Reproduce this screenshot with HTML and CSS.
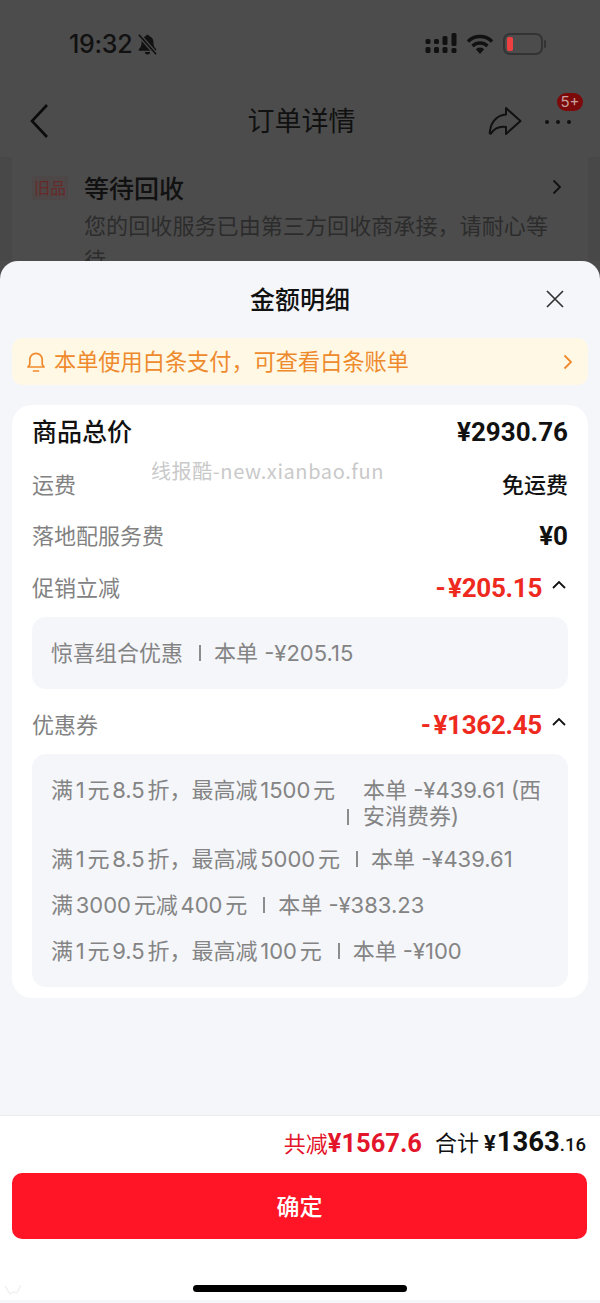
FILE: index.html
```html
<!DOCTYPE html>
<html lang="zh-CN">
<head>
<meta charset="utf-8">
<title>金额明细</title>
<link rel="stylesheet" href="styles.css">
</head>
<body>
<div class="phone">
  <div class="backdrop">
    <div class="status">
      <div class="status-left">
        <span class="time">19:32</span>
        <svg class="mute" viewBox="0 0 20 20" width="23" height="23"><path d="M10 1.500c-.8 0-1.300.5-1.400 1.200C6 3.500 4.800 5.500 4.800 8.500c0 3-1 4.500-2.300 5.500v1.500h15V14c-1.300-1-2.300-2.500-2.300-5.500 0-3-1.200-5-3.800-5.800-.1-.7-.6-1.200-1.400-1.200zM7.800 16.500a2.200 2.200 0 0 0 4.400 0z" fill="#111"/><path d="M2.500 1.500l15 17" stroke="#4c4c4c" stroke-width="3.600"/><path d="M2.500 1.500l15 17" stroke="#111" stroke-width="1.500"/></svg>
      </div>
      <div class="status-right">
        <svg viewBox="0 0 31 22" width="32" height="22"><g fill="#111"><rect x="0" y="6" width="5" height="5" rx="1.500"/><rect x="0" y="14" width="5" height="6" rx="1.500"/><rect x="8.500" y="6" width="5" height="5" rx="1.500"/><rect x="8.500" y="14" width="5" height="6" rx="1.500"/><rect x="17" y="3" width="5" height="9" rx="1.500"/><rect x="17" y="14" width="5" height="6" rx="1.500"/><rect x="26" y="0" width="5" height="13" rx="1.500"/><rect x="26" y="15" width="5" height="5" rx="1.500"/></g></svg>
        <svg viewBox="0 0 28 22" width="28" height="22"><path d="M2 8.500a17 17 0 0 1 24 0M6.500 13a11 11 0 0 1 15 0" fill="none" stroke="#111" stroke-width="3.400"/><path d="M9.800 16.300a6 6 0 0 1 8.400 0L14 21z" fill="#111"/></svg>
        <div class="battery"><span class="charge"></span></div>
      </div>
    </div>
    <div class="nav">
      <svg class="back" viewBox="0 0 20 36" width="20" height="36"><path d="M18 2L3 18l15 16" fill="none" stroke="#0b0b0b" stroke-width="2.600"/></svg>
      <h1 class="nav-title">订单详情</h1>
      <div class="nav-actions">
        <svg viewBox="0 0 34 30" width="34" height="30"><path d="M18 2L32.500 15 18 28v-7C11 20 6 23 3 27.500c-1.500.5-1.500-.5-1-2.500C3 15 10 9 18 8.500z" fill="none" stroke="#111" stroke-width="2" stroke-linejoin="round"/></svg>
        <div class="more"><i></i><i></i><i></i><span class="badge">5+</span></div>
      </div>
    </div>
    <div class="under">
      <div class="under-card">
        <span class="old-tag">旧品</span>
        <div class="under-body">
          <div class="under-head"><span class="under-title">等待回收</span>
            <svg viewBox="0 0 10 16" width="10" height="16"><path d="M1.500 1.500L8 8l-6.500 6.500" fill="none" stroke="#111" stroke-width="1.800"/></svg>
          </div>
          <p class="under-text">您的回收服务已由第三方回收商承接，请耐心等待</p>
        </div>
      </div>
    </div>
  </div>

  <section class="sheet">
    <header class="sheet-head">
      <h2 class="sheet-title">金额明细</h2>
      <svg class="close" viewBox="0 0 20 20" width="20" height="20"><path d="M2 2l16 16M18 2L2 18" stroke="#333" stroke-width="1.700" fill="none"/></svg>
    </header>
    <div class="notice">
      <svg viewBox="0 0 18 22" width="18" height="22"><path d="M1 16h16l-1.800-2.500V8.500A6.200 6.200 0 0 0 2.800 8.500v5zM6.500 20h5" fill="none" stroke="#f08a2c" stroke-width="1.700" stroke-linejoin="round" stroke-linecap="round"/></svg>
      <span class="notice-text">本单使用白条支付，可查看白条账单</span>
      <svg viewBox="0 0 10 16" width="10" height="16"><path d="M1.500 1.500L8 8l-6.500 6.500" fill="none" stroke="#f08a2c" stroke-width="1.800"/></svg>
    </div>
    <div class="card">
      <div class="row row-total"><span class="total-label">商品总价</span><span class="price">¥2930.76</span></div>
      <div class="row row-ship"><span class="label">运费</span><span class="price-small">免运费</span></div>
      <div class="row row-land"><span class="label">落地配服务费</span><span class="price">¥0</span></div>
      <div class="row row-promo"><span class="label">促销立减</span>
        <span class="discount-wrap"><span class="discount">- ¥205.15</span>
        <svg class="caret" viewBox="0 0 14 10" width="14" height="10"><path d="M1 8l6-6 6 6" fill="none" stroke="#111" stroke-width="1.800"/></svg></span>
      </div>
      <div class="box box-promo">
        <div class="line"><span class="line-name">惊喜组合优惠</span><span class="sep"></span><span class="line-amount">本单 -¥205.15</span></div>
      </div>
      <div class="row row-coupon"><span class="label">优惠券</span>
        <span class="discount-wrap"><span class="discount">- ¥1362.45</span>
        <svg class="caret" viewBox="0 0 14 10" width="14" height="10"><path d="M1 8l6-6 6 6" fill="none" stroke="#111" stroke-width="1.800"/></svg></span>
      </div>
      <div class="box box-coupon">
        <div class="line line-wrap"><span class="line-name">满1元8.5折，最高减1500元</span><span class="sep sep-end"></span><span class="line-amount">本单 -¥439.61 (西安消费券)</span></div>
        <div class="line"><span class="line-name">满1元8.5折，最高减5000元</span><span class="sep"></span><span class="line-amount">本单 -¥439.61</span></div>
        <div class="line"><span class="line-name">满3000元减400元</span><span class="sep"></span><span class="line-amount">本单 -¥383.23</span></div>
        <div class="line"><span class="line-name">满1元9.5折，最高减100元</span><span class="sep"></span><span class="line-amount">本单 -¥100</span></div>
      </div>
    </div>
    <span class="watermark">线报酷-new.xianbao.fun</span>
    <footer class="foot">
      <div class="sum">
        <span class="saved">共减<b>¥1567.6</b></span>
        <span class="grand"><span class="grand-label">合计</span> <b class="yen">¥</b><b class="big">1363</b><b class="cents">.16</b></span>
      </div>
      <button class="confirm">确定</button>
      <div class="home-wrap"><span class="home"></span></div>
      <svg class="corner-mark" viewBox="0 0 18 12" width="18" height="12"><path d="M1 2l5 8 3-2M17 1l-4 8-4-1" fill="none" stroke="#f1f1f1" stroke-width="1.500"/></svg>
    </footer>
  </section>
</div>
</body>
</html>
```
FILE: styles.css
```css
* { box-sizing: border-box; }
html, body { margin: 0; padding: 0; }
body { font-family: "Noto Sans CJK SC", "Inter", sans-serif; background: #4c4c4c; }
h1, h2, p { margin: 0; font-weight: 400; }
.phone { width: 600px; height: 1303px; display: flex; flex-direction: column; position: relative; overflow: hidden; text-autospace: normal; background: #4c4c4c; }

.backdrop { height: 261px; background: #4c4c4c; overflow: hidden; flex: none; color: #111; }
.status { height: 85px; padding: 22px 57px 0 69px; display: flex; justify-content: space-between; align-items: flex-start; }
.status-left, .status-right { display: flex; align-items: center; height: 44px; }
.status-left { gap: 4px; }
.status-right { gap: 9px; }
.time { font-family: "Inter", sans-serif; font-size: 25px; font-weight: 500; color: #111; letter-spacing: -.3px; }
.battery { width: 40px; height: 22px; border: 2px solid #333; border-radius: 7px; padding: 2px; position: relative; }
.battery::after { content: ""; position: absolute; right: -5px; top: 5px; width: 2px; height: 8px; background: #333; border-radius: 1px; }
.charge { display: block; width: 6px; height: 14px; background: #ee4040; border-radius: 2px; }

.nav { height: 72px; display: flex; align-items: center; justify-content: space-between; padding: 0 29px; position: relative; }
.back { flex: none; }
.nav-title { position: absolute; left: 3px; right: 0; text-align: center; font-size: 27px; color: #111; top: 15px; }
.nav-actions { display: flex; align-items: center; gap: 23px; position: relative; }
.more { display: flex; gap: 7px; position: relative; padding-top: 2px; }
.more i { width: 4px; height: 4px; background: #111; border-radius: 50%; display: block; }
.badge { position: absolute; right: -12px; top: -25px; width: 26px; height: 18px; border-radius: 9px; background: #7c0a0a; color: #c9a0a0; font: 15px/18px "Inter", sans-serif; text-align: center; }

.under { background: #484848; height: 104px; padding: 0 12px; }
.under-card { background: #4c4c4c; height: 104px; padding: 14px 26px 0 20px; display: flex; gap: 16px; }
.old-tag { flex: none; width: 36px; height: 24px; margin-top: 5px; background: #4e4747; color: #662a2a; font-size: 16px; line-height: 22px; text-align: center; border-radius: 3px; }
.under-body { flex: 1; }
.under-head { display: flex; justify-content: space-between; align-items: center; height: 32px; }
.under-title { font-size: 25px; font-weight: 500; color: #111; }
.under-text { margin-top: 4px; font-size: 22.100px; line-height: 34px; color: #2c2c2c; width: 470px; }

.sheet { flex: 1; background: #f4f6fa; border-radius: 18px 18px 0 0; display: flex; flex-direction: column; position: relative; z-index: 1; }
.sheet-head { height: 77px; display: flex; align-items: center; justify-content: center; position: relative; padding-bottom: 4px; }
.sheet-title { font-size: 25px; font-weight: 500; color: #111; }
.close { position: absolute; right: 35px; top: 28px; }
.notice { margin: 0 12px; height: 47px; background: #fff8e4; border-radius: 10px; display: flex; align-items: center; padding: 0 15px; gap: 9px; }
.notice-text { flex: 1; font-size: 22.200px; color: #ee8a2c; margin-bottom: 4px; }
.card { margin: 20px 12px 0; height: 593px; background: #fff; border-radius: 20px; padding: 0 20px; }
.row { display: flex; justify-content: space-between; align-items: center; }
.row-total { height: 54px; }
.row-ship { height: 52px; }
.row-land { height: 50px; }
.row-promo { height: 54px; }
.row-coupon { height: 65px; padding-top: 7px; }
.label { font-size: 22px; color: #828282; margin-bottom: 4px; }
.total-label { font-size: 25px; font-weight: 500; color: #111; margin-bottom: 4px; }
.price { font-family: "Roboto", sans-serif; font-size: 26px; font-weight: 700; color: #111; }
.price-small { font-size: 22px; font-weight: 500; color: #111; margin-bottom: 4px; }
.discount-wrap { display: flex; align-items: center; gap: 10px; padding-right: 2px; }
.discount { font-family: "Roboto", sans-serif; font-size: 26px; font-weight: 700; color: #ee2a1f; word-spacing: -3.500px; letter-spacing: -.3px; }
.caret { margin-bottom: 6px; }
.box { background: #f4f6fa; border-radius: 14px; padding: 0 19px; display: flex; flex-direction: column; gap: 20px; }
.box-promo { height: 72px; justify-content: center; margin-top: 2px; }
.box-coupon { height: 233px; padding-top: 23px; padding-bottom: 23px; }
.line { display: flex; font-size: 22px; line-height: 26px; color: #848484; font-family: "Inter", "Noto Sans CJK SC", sans-serif; }
.line-wrap { margin-bottom: -3px; }
.line-name { flex: none; }
.line-amount { flex: 1; }
.sep { flex: none; width: 2px; height: 16px; background: #8c8c8c; margin: 5px 13px 0 16px; }
.sep-end { align-self: flex-end; margin: 0 14px 4px 12px; }
.watermark { position: absolute; left: 151px; top: 195px; font-family: "Noto Sans CJK SC", sans-serif; font-size: 20px; color: #c9c9c9; letter-spacing: .6px; white-space: nowrap; }

.foot { margin-top: auto; margin-bottom: 3px; height: 185px; background: #fff; border-top: 1px solid #ececec; display: flex; flex-direction: column; padding: 0 14px 0 12px; position: relative; }
.sum { height: 57px; padding-bottom: 6px; display: flex; justify-content: flex-end; align-items: center; gap: 13px; flex: none; }
.saved { font-size: 22px; color: #e3152a; }
.saved b { font-family: "Roboto", sans-serif; font-size: 25.500px; font-weight: 700; }
.grand { font-size: 22px; color: #111; }
.yen { font-family: "Roboto", sans-serif; font-size: 22px; font-weight: 700; margin-right: 1px; }
.big { font-family: "Roboto", sans-serif; font-size: 27.500px; font-weight: 700; }
.cents { font-family: "Roboto", sans-serif; font-size: 18.500px; font-weight: 500; }
.confirm { height: 66px; width: 575px; border: 0; border-radius: 10px; background: #ff1526; color: #fff; font: 500 23px "Noto Sans CJK SC", sans-serif; flex: none; padding-bottom: 4px; }
.home-wrap { flex: 1; display: flex; justify-content: center; padding-top: 46px; padding-left: 2px; }
.home { width: 214px; height: 7px; background: #000; border-radius: 4px; }
.corner-mark { position: absolute; left: 4px; bottom: 4px; }
```
